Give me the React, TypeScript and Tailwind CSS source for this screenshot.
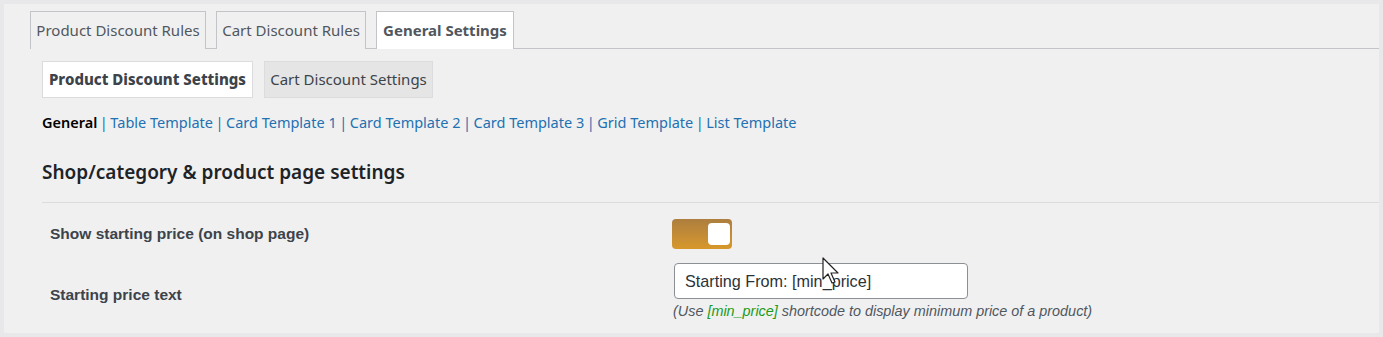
import React, { useState } from 'react'

const mainTabs = [
    { label: 'Product Discount Rules', w: 'w-[176px]' },
    { label: 'Cart Discount Rules', w: 'w-[150px]' },
    { label: 'General Settings', w: 'w-[138px]', active: true },
]

const templateLinks = ['Table Template', 'Card Template 1', 'Card Template 2', 'Card Template 3', 'Grid Template', 'List Template']

const Cursor = () => (
    <svg className="absolute left-[822px] top-[257px]" width="20" height="30" viewBox="0 0 20 30">
        <path d="M1 1 L1 22 L6 17 L10 26 L13 25 L9 16 L16 16 Z" fill="#fff" stroke="#222" strokeWidth="1.2" strokeLinejoin="round" />
    </svg>
)

const App = () => {
    const [on, setOn] = useState(true)
    const [text, setText] = useState('Starting From: [min_price]')

    return (
        <div className="h-[337px] w-full bg-[#e8e8ea] p-1 relative">
            <div className="h-full bg-[#f0f0f1] font-['Noto_Sans',sans-serif]">
                {/* top tabs */}
                <div className="ml-[26px] pt-[7px] flex gap-[10px] border-b border-[#c3c4c7] h-[45px]">
                    {mainTabs.map((t) => (
                        <div
                            key={t.label}
                            className={`${t.w} h-[38px] border border-[#c3c4c7] border-b-0 flex items-center justify-center text-[15px] ${t.active ? 'bg-white font-bold text-[#50575e]' : 'bg-[#f0f0f1] text-[#50575e]'}`}
                        >
                            {t.label}
                        </div>
                    ))}
                </div>

                <div className="pl-[38px]">
                    {/* sub tabs */}
                    <div className="mt-[12px] flex gap-[11px]">
                        <div className="w-[211px] h-[37px] bg-white border border-[#dcdcde] flex items-center justify-center text-[15px] font-extrabold text-[#3c434a]">
                            Product Discount Settings
                        </div>
                        <div className="w-[169px] h-[37px] bg-[#e5e5e5] border border-[#dcdcde] flex items-center justify-center text-[15px] text-[#3c434a]">
                            Cart Discount Settings
                        </div>
                    </div>

                    {/* template links */}
                    <div className="mt-[14px] h-[22px] flex items-center text-[14.5px] text-[#2271b1] whitespace-pre">
                        <span className="font-semibold text-black">General</span>
                        {templateLinks.map((l) => (
                            <span key={l} className="flex items-center">
                                <span className="mx-[2.5px]">|</span>
                                <a className="text-[#2271b1]">{l}</a>
                            </span>
                        ))}
                    </div>

                    <h2 className="mt-[25px] h-[26px] flex items-center text-[19px] font-semibold text-[#1d2327]">
                        Shop/category &amp; product page settings
                    </h2>

                    <div className="mt-[17px] border-t border-[#dcdcde]" />

                    {/* settings rows */}
                    <div className="font-['Liberation_Sans',Arial,sans-serif] text-[#3c434a]">
                        <div className="flex items-center h-[30px] mt-[16px]">
                            <div className="w-[630px] pl-[8px] text-[15.5px] font-bold">Show starting price (on shop page)</div>
                            <button
                                onClick={() => setOn(!on)}
                                className="w-[60px] h-[30px] rounded-[4px] bg-gradient-to-b from-[#ad7e3e] to-[#d7982a] flex items-center justify-end pr-[2px]"
                            >
                                <span className="w-[22px] h-[22px] bg-white rounded-[4px]" />
                            </button>
                        </div>
                        <div className="flex mt-[14px]">
                            <div className="w-[630px] pl-[8px] pt-[20px] text-[15.5px] font-bold">Starting price text</div>
                            <div className="pl-[2px]">
                                <input
                                    value={text}
                                    onChange={(e) => setText(e.target.value)}
                                    className="w-[294px] h-[36px] rounded-[4px] border border-[#8c8f94] bg-white px-[10px] text-[16.2px] text-[#2c3338] outline-none"
                                />
                                <p className="mt-[2px] text-[14.4px] italic text-[#50575e] -ml-[1px]">
                                    (Use <span className="text-[#1a9b1a]">[min_price]</span> shortcode to display minimum price of a product)
                                </p>
                            </div>
                        </div>
                    </div>
                </div>
            </div>
            <Cursor />
        </div>
    )
}

export default App
